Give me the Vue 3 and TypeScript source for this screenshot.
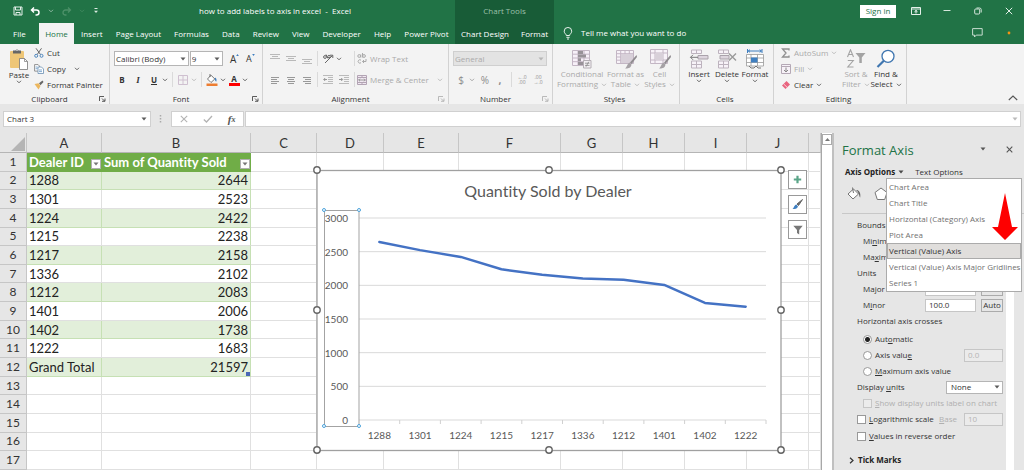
<script setup lang="ts">
import { ref } from 'vue'

interface Row {
  id: string
  qty: number
}

const tabs: string[] = ['File', 'Home', 'Insert', 'Page Layout', 'Formulas', 'Data', 'Review', 'View', 'Developer', 'Help', 'Power Pivot']
const columns: string[] = ['A', 'B', 'C', 'D', 'E', 'F', 'G', 'H', 'I', 'J', '']
const emptyColumns: string[] = columns.slice(2)

const dealers: Row[] = [
  { id: '1288', qty: 2644 },
  { id: '1301', qty: 2523 },
  { id: '1224', qty: 2422 },
  { id: '1215', qty: 2238 },
  { id: '1217', qty: 2158 },
  { id: '1336', qty: 2102 },
  { id: '1212', qty: 2083 },
  { id: '1401', qty: 2006 },
  { id: '1402', qty: 1738 },
  { id: '1222', qty: 1683 },
]
const total = dealers.reduce((sum, d) => sum + d.qty, 0)
const tableRows: Row[] = [...dealers, { id: 'Grand Total', qty: total }]
const blankRows: number[] = [13, 14, 15, 16, 17]

const plot = { left: 49, right: 456, top: 54, bottom: 256 }
const step = (plot.right - plot.left) / dealers.length
const yOf = (v: number): number => plot.bottom - (v / 3000) * (plot.bottom - plot.top)
const xOf = (i: number): number => plot.left + step * (i + 0.5)
const ticks: number[] = [3000, 2500, 2000, 1500, 1000, 500, 0]
const linePoints = dealers.map((d, i) => `${xOf(i)},${yOf(d.qty)}`).join(' ')
const frameHandles: number[][] = [[7, 6], [239, 6], [471, 6], [7, 146], [471, 146], [7, 286], [239, 286], [471, 286]]
const axisHandles: number[][] = [[14, 46], [49, 46], [14, 262], [49, 262]]

const elements: string[] = [
  'Chart Area',
  'Chart Title',
  'Horizontal (Category) Axis',
  'Plot Area',
  'Vertical (Value) Axis',
  'Vertical (Value) Axis Major Gridlines',
  'Series 1',
]
const selected = ref('Vertical (Value) Axis')
const crosses = ref('auto')
</script>

<template>
  <div class="excel">
    <svg class="sprite" aria-hidden="true">
      <symbol id="chev" viewBox="0 0 6 4"><path d="M1 .8 3 2.8 5 .8" fill="none" stroke="currentColor" stroke-width=".9" /></symbol>
      <symbol id="tri" viewBox="0 0 6 4"><path d="M.5 .5h5L3 3.5z" fill="currentColor" /></symbol>
      <symbol id="launch" viewBox="0 0 7 6"><path d="M.5 5V.5H5M3 2.5 5.500 5M6 2.500V5.300H3" fill="none" stroke="currentColor" stroke-width=".8" /></symbol>
      <symbol id="brush" viewBox="0 0 12 14"><path d="M11.500 0 12 2 6.500 9 5 7.600z" fill="#8f8b8f" /><path d="M4.500 7.500 6.500 9.500C6 13 3 13.800 0 13.500 2 12.500 2 9 4.500 7.500z" fill="#a5a1a5" /></symbol>
    </svg>

    <header class="top">
      <div class="title-left">
        <div class="quick">
          <button aria-label="Save"><svg width="10" height="10" viewBox="0 0 10 10"><path d="M1 1h8v8H1zM2.500 1v3h5V1M3 9V6.500h4V9" fill="none" stroke="#e4f0e9" /></svg></button>
          <button aria-label="Undo"><svg width="11" height="9" viewBox="0 0 11 9"><path d="M1.500 3h5a2.500 2.500 0 0 1 0 5H5.500M4 .5 1.500 3 4 5.500" fill="none" stroke="#fff" stroke-width="1.500" /></svg></button>
          <svg class="chev pale"><use href="#chev" /></svg>
          <button aria-label="Redo"><svg width="11" height="9" viewBox="0 0 11 9"><path d="M9.500 3h-5a2.500 2.500 0 0 0 0 5h1M7 .5 9.500 3 7 5.500" fill="none" stroke="#4c9068" stroke-width="1.300" /></svg></button>
          <svg class="chev faded"><use href="#chev" /></svg>
          <button class="customize" aria-label="Customize toolbar"><svg width="6" height="6" viewBox="0 0 6 6"><path d="M1.500 .5h3" stroke="#dcebe2" /><path d="M1 2.800h4L3 5z" fill="#dcebe2" /></svg></button>
        </div>
        <h1>how to add labels to axis in excel &nbsp;-&nbsp; Excel</h1>
      </div>
      <div class="context-title">Chart Tools</div>
      <div class="window">
        <button class="signin">Sign in</button>
        <button aria-label="Ribbon display options"><svg width="10" height="8" viewBox="0 0 10 8"><path d="M.5 .5h9v7h-9zM.5 2h9" fill="none" stroke="#e4f0e9" /><path d="M5 6.500V3.500M3.500 4.800 5 3.400 6.500 4.800" fill="none" stroke="#fff" /></svg></button>
        <button aria-label="Minimize"><svg width="8" height="8" viewBox="0 0 8 8"><path d="M.5 3.500h7" stroke="#d5e6dc" /></svg></button>
        <button aria-label="Restore"><svg width="8" height="8" viewBox="0 0 8 8"><rect x=".7" y="2" width="5" height="5" rx="1" fill="none" stroke="#d5e6dc" /><path d="M2.500 1h3a1.700 1.700 0 0 1 1.700 1.700v2.800" fill="none" stroke="#d5e6dc" /></svg></button>
        <button aria-label="Close"><svg width="8" height="8" viewBox="0 0 8 8"><path d="M.8 .8l6.400 6.400M7.200 .8.8 7.200" stroke="#e4f0e9" /></svg></button>
      </div>
      <nav class="tabs">
        <button v-for="t in tabs" :key="t" :class="{ active: t === 'Home', file: t === 'File' }">{{ t }}</button>
      </nav>
      <nav class="tabs context">
        <button>Chart Design</button>
        <button>Format</button>
      </nav>
      <div class="tell">
        <svg width="10" height="13" viewBox="0 0 10 13"><path d="M3.300 8.500C3.300 7 1.200 6.500 1.200 4.200a3.700 3.700 0 0 1 7.500 0C8.700 6.500 6.600 7 6.600 8.500zM3.400 10.300h3.200M4 12h2" fill="none" stroke="#fff" stroke-width=".9" /></svg>
        <button class="tell-label">Tell me what you want to do</button>
        <button class="side" aria-label="Comments"><svg width="11" height="10" viewBox="0 0 11 10"><path d="M.6 .6h9.600v6.500H4.200L2.500 9V7.100H.6z" fill="none" stroke="#c6dccf" /></svg></button>
        <button class="side" aria-label="Status"><svg width="4" height="4" viewBox="0 0 4 4"><circle cx="2" cy="2" r="1.400" fill="#f39314" /></svg></button>
      </div>
    </header>

    <section class="ribbon" aria-label="Ribbon">
      <div class="group">
        <div class="body">
          <button class="big paste">
            <svg width="20" height="22" viewBox="0 0 20 22"><rect x="1" y="3" width="14" height="17" rx="1" fill="#eec677" /><path d="M4 2.500h2.500a1.600 1.600 0 0 1 3 0H12V5.500H4z" fill="#666" /><circle cx="8" cy="2.400" r=".7" fill="#f1f1f1" /><path d="M10.500 10.500h5l3 3v8h-8z" fill="#fff" stroke="#777" stroke-width=".8" /><path d="M15.500 10.500v3h3" fill="none" stroke="#777" stroke-width=".7" /></svg>
            <span>Paste</span>
            <svg class="chev"><use href="#chev" /></svg>
          </button>
          <div class="stack">
            <button><svg width="10" height="10" viewBox="0 0 10 10"><path d="M2 .3 6.500 6.500M7.500 .3 3.200 6.500" stroke="#666" /><circle cx="2.200" cy="7.800" r="1.500" fill="none" stroke="#4e86bd" /><circle cx="7.500" cy="7.800" r="1.500" fill="none" stroke="#4e86bd" /></svg>Cut</button>
            <button><svg width="10" height="10" viewBox="0 0 10 10"><path d="M.6 .6h3.500l1.400 1.500v5H.6z" fill="#fff" stroke="#777" stroke-width=".8" /><path d="M4 3h3.500l2 2v4.500H4z" fill="#fff" stroke="#6b8fb3" stroke-width=".8" /><path d="M5 6h3M5 7.600h3M1.600 3h2M1.600 4.700h2" stroke="#4e86bd" stroke-width=".7" /></svg>Copy <svg class="chev after"><use href="#chev" /></svg></button>
            <button><svg width="10" height="10" viewBox="0 0 10 10"><path d="M.5 4 4.500 3.200 6.500 6 4.500 9.500z" fill="#ecb75f" /><path d="M5 3.200 8.500 .6 9.500 2 6.500 5.200z" fill="#666" /></svg>Format Painter</button>
          </div>
        </div>
        <footer><span>Clipboard</span><svg class="launch"><use href="#launch" /></svg></footer>
      </div>

      <div class="group">
        <div class="body rows">
          <div class="row">
            <label class="pick font-name"><select aria-label="Font"><option>Calibri (Body)</option></select><svg class="chev"><use href="#tri" /></svg></label>
            <label class="pick font-size"><select aria-label="Font size"><option>9</option></select><svg class="chev"><use href="#tri" /></svg></label>
            <button class="t16 glyph" aria-label="Increase font size">A<svg class="mark" viewBox="0 0 4 3"><path d="M0 3 2 0 4 3z" fill="#3f7fc0" /></svg></button>
            <button class="t16 glyph small" aria-label="Decrease font size">A<svg class="mark" viewBox="0 0 4 3"><path d="M0 0h4L2 3z" fill="#3f7fc0" /></svg></button>
          </div>
          <div class="row">
            <button class="t16 bold">B</button>
            <button class="t16 italic">I</button>
            <button class="t16 under">U</button>
            <svg class="chev"><use href="#chev" /></svg>
            <i class="sep wide"></i>
            <button class="t16" aria-label="Borders"><svg width="10" height="10" viewBox="0 0 10 10"><path d="M.5 .5h9v9h-9zM5 .5v9M.5 5h9" fill="none" stroke="#cfc0d0" /></svg></button>
            <svg class="chev dim"><use href="#chev" /></svg>
            <i class="sep wide"></i>
            <button class="t16" aria-label="Fill color"><svg width="12" height="12" viewBox="0 0 12 12"><path d="M5 1.200 8.800 5 5 8.500 1.500 5zM4 0v3" fill="#fff" stroke="#666" stroke-width=".9" /><path d="M9 3.500c1.700 1 1.800 2.500 1.200 4.300C9 7 8.500 5.500 9 3.500z" fill="#3f7fc0" /><path d="M.5 9.500h11V12H.5z" fill="#ed7d31" /></svg></button>
            <svg class="chev"><use href="#chev" /></svg>
            <button class="t16 color-a" aria-label="Font color"><span>A</span></button>
            <svg class="chev"><use href="#chev" /></svg>
          </div>
        </div>
        <footer><span>Font</span><svg class="launch"><use href="#launch" /></svg></footer>
      </div>

      <div class="group">
        <div class="body rows">
          <div class="row">
            <button class="t16" aria-label="Top align"><svg width="10" height="12" viewBox="0 0 10 12"><path d="M0 1.500h10M2 3.500h6M0 5.500h10" stroke="#b9b9b9" /></svg></button>
            <button class="t16" aria-label="Middle align"><svg width="10" height="12" viewBox="0 0 10 12"><path d="M0 3.500h10M2 5.500h6M0 7.500h10" stroke="#b9b9b9" /></svg></button>
            <button class="t16" aria-label="Bottom align"><svg width="10" height="12" viewBox="0 0 10 12"><path d="M0 6.500h10M2 8.500h6M0 10.500h10" stroke="#b9b9b9" /></svg></button>
            <i class="sep"></i>
            <button class="t16" aria-label="Orientation"><svg width="11" height="11" viewBox="0 0 11 11"><path d="M2 10 9.500 2.500M9.800 5V2.200H7" fill="none" stroke="#666" /><circle cx="2" cy="4" r="1.400" fill="none" stroke="#666" /><path d="M3 1.500 5 5.500" stroke="#666" /><circle cx="6" cy="3.500" r="1.200" fill="none" stroke="#666" /></svg></button>
            <svg class="chev"><use href="#chev" /></svg>
            <i class="sep push"></i>
            <button class="label-btn dim"><svg width="10" height="11" viewBox="0 0 10 11"><circle cx="2.200" cy="3" r="1.400" fill="none" stroke="#aaa" /><path d="M3.800 1.500v3M5.500 0v4.500M4 7.200a1.700 1.700 0 1 0 0 2.500M9 6v2.500H5.500M7 7 5.500 8.500 7 10" fill="none" stroke="#aaa" /><circle cx="7" cy="3" r="1.400" fill="none" stroke="#aaa" /></svg>Wrap Text</button>
          </div>
          <div class="row">
            <button class="t16" aria-label="Align left"><svg width="8" height="8" viewBox="0 0 8 8"><path d="M0 1.500h8M0 3.500h6M0 5.500h8M0 7.500h6" stroke="#999" /></svg></button>
            <button class="t16" aria-label="Center"><svg width="8" height="8" viewBox="0 0 8 8"><path d="M0 1.500h8M1 3.500h6M0 5.500h8M1 7.500h6" stroke="#999" /></svg></button>
            <button class="t16" aria-label="Align right"><svg width="8" height="8" viewBox="0 0 8 8"><path d="M0 1.500h8M2 3.500h6M0 5.500h8M2 7.500h6" stroke="#999" /></svg></button>
            <i class="sep"></i>
            <button class="t16" aria-label="Decrease indent"><svg width="10" height="9" viewBox="0 0 10 9"><path d="M0 .5h10M5 2.500h5M5 4.500h5M5 6.500h5M0 8.500h10" stroke="#bbb" /><path d="M4 4.500H.8M2.200 3 .7 4.500 2.200 6" fill="none" stroke="#999" /></svg></button>
            <button class="t16" aria-label="Increase indent"><svg width="10" height="9" viewBox="0 0 10 9"><path d="M0 .5h10M5 2.500h5M5 4.500h5M5 6.500h5M0 8.500h10" stroke="#bbb" /><path d="M0 4.500h3.500M2.200 3l1.500 1.500L2.200 6" fill="none" stroke="#999" /></svg></button>
            <i class="sep push"></i>
            <button class="label-btn dim"><svg width="10" height="10" viewBox="0 0 10 10"><path d="M.5 .5h9v9h-9zM5 .5v2M5 7.500v2M.5 2.500h9M.5 7.500h9" fill="#f0e8f1" stroke="#b3a4b4" /><path d="M1.500 5h7M3 3.700 1.700 5 3 6.300M7 3.700 8.300 5 7 6.300" fill="none" stroke="#888" stroke-width=".8" /></svg>Merge &amp; Center<svg class="chev after"><use href="#chev" /></svg></button>
          </div>
        </div>
        <footer><span>Alignment</span><svg class="launch dim"><use href="#launch" /></svg></footer>
      </div>

      <div class="group">
        <div class="body rows">
          <div class="row">
            <label class="pick number"><select aria-label="Number format" disabled><option>General</option></select><svg class="chev dim"><use href="#tri" /></svg></label>
          </div>
          <div class="row signs">
            <button class="t16 sign">$</button>
            <svg class="chev"><use href="#chev" /></svg>
            <button class="t20 sign">%</button>
            <button class="sign comma">,</button>
            <i class="sep"></i>
            <button class="t16 decimals">←.0<br />.00</button>
            <button class="t16 decimals">.00<br />→.0</button>
          </div>
        </div>
        <footer><span>Number</span><svg class="launch dim"><use href="#launch" /></svg></footer>
      </div>

      <div class="group">
        <div class="body tiles dim">
          <button class="big cond">
            <svg width="22" height="20" viewBox="0 0 22 20"><path d="M1.500 1.500h17v15h-17zM7 1.500v15M13 1.500v15M1.500 5.200h17M1.500 9h17M1.500 12.700h17" fill="#f7f0f8" stroke="#c3b6c4" /><path d="M7 2h5v3H7zM7 5.500h8v3H7zM7 9.300h3v3H7zM7 13h5v3H7z" fill="#989298" /><path d="M12.500 11.500h7.500v7.500h-7.500z" fill="#f3f0f3" stroke="#b5afb5" /><path d="M14 14.200h4.500M14 16.400h4.500M17.800 12.700l-2.800 5" stroke="#888" stroke-width=".8" /></svg>
            <span>Conditional<br />Formatting <svg class="chev"><use href="#chev" /></svg></span>
          </button>
          <button class="big fmt-table">
            <svg width="22" height="20" viewBox="0 0 22 20"><path d="M1.500 1.500h17v13h-17zM5.700 1.500v13M10 1.500v13M14.300 1.500v13M1.500 4.700h17M1.500 8h17M1.500 11.200h17" fill="#f7f2f8" stroke="#c3b6c4" /><path d="M6 5h12v9H6z" fill="#d8d0d9" /><use href="#brush" x="10" y="6" width="12" height="14" /></svg>
            <span>Format as<br />Table <svg class="chev"><use href="#chev" /></svg></span>
          </button>
          <button class="big cell-styles">
            <svg width="22" height="20" viewBox="0 0 22 20"><path d="M1.500 .5h17v14h-17zM6 .5v14M14 .5v14M1.500 4h17M1.500 11h17" fill="#f7f2f8" stroke="#c3b6c4" /><path d="M6 4h8v7H6z" fill="#d8d0d9" /><use href="#brush" x="10" y="6" width="12" height="14" /></svg>
            <span>Cell<br />Styles <svg class="chev"><use href="#chev" /></svg></span>
          </button>
        </div>
        <footer><span>Styles</span></footer>
      </div>

      <div class="group">
        <div class="body tiles cells">
          <button class="big">
            <svg width="20" height="20" viewBox="0 0 20 20"><path d="M2.500 1h10v3.500h-10zM7.500 1v3.500M2.500 12h10v7h-10zM7.500 12v7M2.500 15.500h10" fill="#f7f2f8" stroke="#bdb3be" /><path d="M9 6.500h10v3.500H9z" fill="#ddd5de" stroke="#aaa2ab" /><path d="M9 8.300H1.500M4 5.800 1.500 8.300 4 10.800" fill="none" stroke="#777" /></svg>
            <span>Insert</span><svg class="chev"><use href="#chev" /></svg>
          </button>
          <button class="big">
            <svg width="20" height="20" viewBox="0 0 20 20"><path d="M1.500 1h10v3.500h-10zM6.500 1v3.500M1.500 12h10v7h-10zM6.500 12v7M1.500 15.500h10" fill="#f7f2f8" stroke="#bdb3be" /><path d="M3 6.500h9v3.500H3z" fill="#ddd5de" stroke="#aaa2ab" /><path d="M12 4.500l7 7M19 4.500l-7 7" stroke="#999" stroke-width="1.400" /></svg>
            <span>Delete</span><svg class="chev"><use href="#chev" /></svg>
          </button>
          <button class="big">
            <svg width="20" height="20" viewBox="0 0 20 20"><path d="M2.500 0v4M17 0v4M3 2h13.500M5 .7 3.300 2 5 3.300M14.700 .7 16.400 2l-1.700 1.300" fill="none" stroke="#3f7fc0" /><path d="M1.500 5.500h17v11.500h-17zM6 5.500v11.500M12.500 5.500v11.500M1.500 9h17M1.500 13.500h17" fill="#fff" stroke="#999" stroke-width=".8" /><path d="M6 8.500h6.500v5H6z" fill="#3f7fc0" /><path d="M4 17l2 2h3l2-2 2 2h3" fill="none" stroke="#777" /></svg>
            <span>Format</span><svg class="chev"><use href="#chev" /></svg>
          </button>
        </div>
        <footer><span>Cells</span></footer>
      </div>

      <div class="group">
        <div class="body editing">
          <div class="stack">
            <button class="dim"><svg width="10" height="10" viewBox="0 0 10 10"><path d="M8 2.500V1H1.500L5 5 1.500 9H8V7.500" fill="none" stroke="#909090" stroke-width="1.300" /></svg>AutoSum<svg class="chev"><use href="#chev" /></svg></button>
            <button class="dim"><svg width="10" height="10" viewBox="0 0 10 10"><path d="M.5 .5h9v9h-9zM.5 2.500h9" fill="#f7f2f8" stroke="#b5a9b6" /><path d="M5 3.500v4.500M3 6l2 2 2-2" fill="none" stroke="#888" /></svg>Fill <svg class="chev"><use href="#chev" /></svg></button>
            <button><svg width="10" height="10" viewBox="0 0 10 10"><path d="M5.500 1 9 4.500 4.500 9 1 5.500z" fill="#e8647f" /><path d="M2.700 4 6 7.200" stroke="#fff" stroke-width=".7" /></svg>Clear <svg class="chev"><use href="#chev" /></svg></button>
          </div>
          <button class="big sort dim">
            <svg width="20" height="20" viewBox="0 0 20 20"><path d="M1.500 8 4.500 .8 7.500 8M2.600 5.500h3.800M1.800 11.500h5.500L1.800 18h5.700" fill="none" stroke="#a3a3a3" stroke-width="1.100" /><path d="M9.500 4h10l-3.700 4.500V14h-2.500V8.500z" fill="#a3a3a3" /></svg>
            <span>Sort &amp;<br />Filter <svg class="chev"><use href="#chev" /></svg></span>
          </button>
          <button class="big">
            <svg width="20" height="20" viewBox="0 0 20 20"><circle cx="12" cy="7.300" r="6" fill="#fff" stroke="#3f76b0" stroke-width="1.300" /><path d="M7.800 11.800 1.500 18" stroke="#3f76b0" stroke-width="2.200" /></svg>
            <span>Find &amp;<br />Select <svg class="chev"><use href="#chev" /></svg></span>
          </button>
        </div>
        <footer><span>Editing</span></footer>
      </div>

      <button class="collapse" aria-label="Collapse ribbon"><svg width="10" height="6" viewBox="0 0 10 6"><path d="M.8 5 5 1l4.200 4" fill="none" stroke="#555" stroke-width="1.100" /></svg></button>
    </section>

    <section class="formula" aria-label="Formula bar">
      <label class="namebox"><input aria-label="Name box" value="Chart 3" /><svg class="chev"><use href="#tri" /></svg></label>
      <svg width="3" height="9" viewBox="0 0 3 9"><path d="M1.500 1v1.500M1.500 4v1.500M1.500 7v1.500" stroke="#aaa" stroke-width="1.500" /></svg>
      <div class="fx">
        <button aria-label="Cancel"><svg width="8" height="8" viewBox="0 0 8 8"><path d="M.8 .8l6.400 6.400M7.200 .8.8 7.200" stroke="#b3b3b3" stroke-width="1.100" /></svg></button>
        <button aria-label="Enter"><svg width="10" height="8" viewBox="0 0 10 8"><path d="M.8 4.500 3.500 7 9 1" fill="none" stroke="#b3b3b3" stroke-width="1.300" /></svg></button>
        <button class="fx-glyph" aria-label="Insert function"><i>f</i><i class="x">x</i></button>
      </div>
      <label class="entry"><input aria-label="Formula" /><svg class="chev dim"><use href="#tri" /></svg></label>
    </section>

    <main class="work">
      <div class="sheet">
        <table>
          <colgroup><col class="c-num" /><col class="c-a" /><col class="c-b" /><col class="c-cd" /><col class="c-d" /><col class="c-e" /><col class="c-f" /><col class="c-g" /><col class="c-g" /><col class="c-g" /><col class="c-g" /><col /></colgroup>
          <thead>
            <tr>
              <th class="corner"><svg width="14" height="14" viewBox="0 0 14 14"><path d="M14 0v14H0z" fill="#b5b5b5" /></svg></th>
              <th v-for="(c, i) in columns" :key="i">{{ c }}</th>
            </tr>
          </thead>
          <tbody>
            <tr class="heading">
              <th>1</th>
              <td><div class="filter-head">Dealer ID<button aria-label="Filter dealers"><svg class="chev"><use href="#tri" /></svg></button></div></td>
              <td><div class="filter-head">Sum of Quantity Sold<button aria-label="Filter quantity"><svg class="chev"><use href="#tri" /></svg></button></div></td>
              <td v-for="(c, i) in emptyColumns" :key="i"></td>
            </tr>
            <tr v-for="(r, n) in tableRows" :key="r.id" :class="{ band: n % 2 === 0, total: n === tableRows.length - 1 }">
              <th>{{ n + 2 }}</th>
              <td class="data">{{ r.id }}</td>
              <td class="data qty">{{ r.qty }}</td>
              <td v-for="(c, i) in emptyColumns" :key="i"></td>
            </tr>
            <tr v-for="n in blankRows" :key="n">
              <th>{{ n }}</th>
              <td v-for="(c, i) in columns" :key="i"></td>
            </tr>
          </tbody>
        </table>

        <svg class="chart" width="478" height="294" viewBox="0 0 478 294" role="img" aria-label="Quantity Sold by Dealer">
          <rect x="7" y="6.500" width="464" height="280" fill="#fff" stroke="#a0a0a0" stroke-width="1.300" />
          <text class="chart-title" x="238" y="33" text-anchor="middle">Quantity Sold by Dealer</text>
          <g v-for="t in ticks" :key="t">
            <line :x1="plot.left" :x2="plot.right" :y1="yOf(t)" :y2="yOf(t)" stroke="#d9d9d9" />
            <text class="axis" x="38" :y="yOf(t) + 4" text-anchor="end">{{ t }}</text>
          </g>
          <g v-for="(d, i) in dealers" :key="d.id">
            <line :x1="xOf(i) + step / 2" :x2="xOf(i) + step / 2" :y1="plot.bottom" :y2="plot.bottom + 4" stroke="#d0d0d0" />
            <text class="axis" :x="xOf(i)" y="275" text-anchor="middle">{{ d.id }}</text>
          </g>
          <polyline :points="linePoints" fill="none" stroke="#4472c4" stroke-width="2.500" stroke-linecap="round" stroke-linejoin="round" />
          <rect x="14.500" y="46.500" width="34.500" height="216" fill="none" stroke="#a3a3a3" />
          <circle v-for="(h, i) in axisHandles" :key="'a' + i" :cx="h[0]" :cy="h[1]" r="1.500" fill="#fff" stroke="#4ba3dc" />
          <circle v-for="(h, i) in frameHandles" :key="'f' + i" :cx="h[0]" :cy="h[1]" r="3.200" fill="#fff" stroke="#666" stroke-width="1.400" />
        </svg>

        <div class="chart-tools">
          <button aria-label="Chart elements"><svg width="9" height="9" viewBox="0 0 9 9"><path d="M4.500 .8v7.400M.8 4.500h7.400" stroke="#5aa588" stroke-width="2.200" /></svg></button>
          <button aria-label="Chart styles"><svg width="11" height="11" viewBox="0 0 11 11"><path d="M10.500 .5 5 5l1.500 1.500z" fill="#666" stroke="#666" /><path d="M4.500 5.500 6 7.500C5 10 3 10 .5 10 2 9 2 6 4.500 5.500z" fill="#3f7fc0" /></svg></button>
          <button aria-label="Chart filters"><svg width="10" height="10" viewBox="0 0 10 10"><path d="M.3 .8h9.400L6.200 5v4.500L4 8V5z" fill="#777" /></svg></button>
        </div>
      </div>

      <div class="scroll"><button aria-label="Scroll up"><svg width="5" height="3" viewBox="0 0 5 3"><path d="M0 3 2.500 0 5 3z" fill="#777" /></svg></button></div>

      <aside class="pane">
        <div class="pane-head">
          <h2>Format Axis</h2>
          <button aria-label="Pane options"><svg class="chev"><use href="#tri" /></svg></button>
          <button aria-label="Close pane"><svg width="7" height="7" viewBox="0 0 7 7"><path d="M.7 .7l5.600 5.600M6.300 .7.7 6.300" stroke="#555" stroke-width="1.100" /></svg></button>
        </div>
        <div class="pane-tabs">
          <button class="on">Axis Options<svg class="chev"><use href="#tri" /></svg></button>
          <button>Text Options</button>
        </div>
        <div class="pane-icons">
          <button aria-label="Fill and line"><svg width="15" height="14" viewBox="0 0 15 14"><path d="M6.500 2 11.500 7 6 12 1 7zM5.500 .5 6.500 6" fill="#fff" stroke="#666" stroke-width=".9" /><path d="M9 3c3 0 5 2.500 4.200 7.500C12 9.500 12.500 5.500 9 3z" fill="#666" /></svg></button>
          <button aria-label="Effects"><svg width="14" height="14" viewBox="0 0 14 14"><path d="M7 1l6 4.500-2.300 7H3.300L1 5.500z" fill="#fff" stroke="#777" /></svg></button>
        </div>
        <div class="pane-scroll">
          <form class="options" @submit.prevent>
            <p>Bounds</p>
            <div class="field sub"><label for="min">Mi<u>n</u>imum</label><input id="min" value="0.0" /><button>Auto</button></div>
            <div class="field sub"><label for="max">Ma<u>x</u>imum</label><input id="max" value="3000.0" /><button>Auto</button></div>
            <p>Units</p>
            <div class="field sub"><label for="major">Ma<u>j</u>or</label><input id="major" value="500.0" /><button>Auto</button></div>
            <div class="field sub"><label for="minor">M<u>i</u>nor</label><input id="minor" value="100.0" /><button>Auto</button></div>
            <p class="crosses">Horizontal axis crosses</p>
            <div class="field sub"><label><input v-model="crosses" type="radio" value="auto" />Aut<u>o</u>matic</label></div>
            <div class="field sub"><label><input v-model="crosses" type="radio" value="value" />Axis valu<u>e</u></label><input class="short" aria-label="Axis value" value="0.0" disabled /></div>
            <div class="field sub"><label><input v-model="crosses" type="radio" value="max" /><span><u>M</u>aximum axis value</span></label></div>
            <div class="field"><label for="units">Display <u>u</u>nits</label><span class="pick units"><select id="units"><option>None</option></select><svg class="chev"><use href="#tri" /></svg></span></div>
            <div class="field sub off"><label><input type="checkbox" disabled /><span><u>S</u>how display units label on chart</span></label></div>
            <div class="field"><label><input type="checkbox" /><span><u>L</u>ogarithmic scale</span></label><label class="base off" for="base"><span><u>B</u>ase</span></label><input id="base" class="short" value="10" disabled /></div>
            <div class="field last"><label><input type="checkbox" /><span><u>V</u>alues in reverse order</span></label></div>
            <button class="section"><svg width="5" height="7" viewBox="0 0 5 7"><path d="M1 .8 4 3.500 1 6.200" fill="none" stroke="#333" stroke-width="1.200" /></svg>Tick Marks</button>
          </form>
        </div>

        <div class="menu">
          <button v-for="e in elements" :key="e" :class="{ current: e === selected }" @click="selected = e">{{ e }}</button>
          <svg class="arrow" width="26" height="47" viewBox="0 0 26 47"><path d="M13 0 20 34h6L13 47 0 34h6z" fill="#fe0000" /></svg>
        </div>
      </aside>
    </main>
  </div>
</template>

<style>
body {
  margin: 0;
}
</style>

<style scoped>
.excel {
  display: flex;
  flex-direction: column;
  height: 100vh;
  overflow: hidden;
  background: #e6e6e6;
  color: #333;
  font: 8px/10px "Open Sans", "Noto Sans", sans-serif;
}
* {
  box-sizing: border-box;
}
button,
input,
select {
  margin: 0;
  padding: 0;
  border: 0;
  border-radius: 0;
  background: none;
  color: inherit;
  font: inherit;
}
button {
  display: flex;
  align-items: center;
  justify-content: center;
  white-space: nowrap;
}
svg {
  flex: none;
}
h1,
h2,
p {
  margin: 0;
  font: inherit;
}
.sprite {
  position: absolute;
  width: 0;
  height: 0;
}
.chev {
  width: 6px;
  height: 4px;
  opacity: 0.8;
}
.dim {
  color: #aaa;
}

.top {
  display: grid;
  grid-template-columns: 455px 99px minmax(0, 1fr);
  grid-template-rows: 22px 22px;
  flex: none;
  background: #217346;
  color: #fff;
}
.title-left {
  display: flex;
  align-items: center;
  justify-content: space-between;
  padding: 0 104px 0 13px;
}
.quick {
  display: flex;
  align-items: center;
  gap: 7px;
}
.customize {
  margin-left: 1px;
}
.pale {
  color: #b9d5c5;
}
.faded {
  color: #4c9068;
}
.context-title,
.context {
  background: #185c37;
}
.context-title {
  display: flex;
  align-items: center;
  justify-content: center;
  color: #9cc0ab;
}
.window {
  display: flex;
  align-items: center;
  justify-content: flex-end;
}
.window button {
  width: 31px;
}
.window .signin {
  width: 36px;
  height: 13px;
  margin-right: 4px;
  background: #fff;
  color: #217346;
}
.tabs {
  display: flex;
  padding-top: 1px;
}
.tabs button {
  flex: auto;
  padding: 0 6px;
}
.tabs .file {
  flex: none;
  padding: 0 13px;
}
.tabs .active {
  background: #f3f3f3;
  color: #217346;
}
.tell {
  display: flex;
  align-items: center;
  padding-left: 9px;
}
.tell-label {
  margin: 0 auto 0 8px;
}
.tell .side {
  width: 31px;
}

.ribbon {
  display: grid;
  grid-template-columns: 110px 153px 186px 104px 127px 94px 133px 1fr;
  flex: none;
  height: 60px;
  background: #f3f3f3;
}
.group {
  display: flex;
  flex-direction: column;
  border-right: 1px solid #d2d2d2;
}
.body {
  display: flex;
  flex: 1;
}
.rows {
  flex-direction: column;
  padding: 4px 4px 0;
}
.row {
  display: flex;
  align-items: center;
  height: 21px;
}
.group footer {
  display: flex;
  align-items: center;
  height: 11px;
  padding-right: 3px;
}
.group footer span {
  flex: 1;
  text-align: center;
}
.launch {
  width: 7px;
  height: 6px;
}
.big {
  flex-direction: column;
  justify-content: flex-start;
}
.big > span {
  text-align: center;
}
.big span .chev {
  margin-left: 1px;
}
.paste {
  width: 34px;
  padding-top: 4px;
  padding-left: 4px;
}
.stack {
  padding-top: 1px;
}
.stack button {
  height: 16px;
  gap: 3px;
}
.after {
  margin-left: 5px;
}
.pick {
  display: flex;
  align-items: center;
  position: relative;
  height: 15px;
  border: 1px solid #b5b5b5;
  background: #fff;
}
.pick select {
  appearance: none;
  width: 100%;
  height: 100%;
  padding-left: 1px;
  line-height: 10px;
}
.pick .chev {
  position: absolute;
  right: 2px;
  pointer-events: none;
}
.font-name {
  width: 77px;
}
.font-size {
  width: 34px;
  margin: 0 4px 0 1px;
}
.number {
  width: 94px;
  background: #e3e3e3;
  border-color: #cfcfcf;
}
.number select {
  opacity: 1;
  color: #ababab;
}
.t16 {
  width: 16px;
  height: 16px;
}
.t20 {
  width: 20px;
}
.glyph {
  font-size: 10px;
}
.glyph .mark {
  width: 3px;
  height: 2px;
  align-self: flex-start;
  margin-top: 3px;
}
.small {
  font-size: 9px;
}
.bold {
  font-weight: 700;
}
.italic {
  font: italic 700 9px/10px "Liberation Serif", serif;
}
.under {
  font-weight: 700;
  text-decoration: underline;
}
.sep {
  width: 1px;
  height: 15px;
  margin: 0 2px;
  background: #dadada;
}
.wide {
  margin: 0 2px 0 4px;
}
.push {
  margin-left: auto;
}
.label-btn {
  gap: 3px;
  width: 87px;
  justify-content: flex-start;
}
.color-a span {
  width: 11px;
  border-bottom: 3px solid #f00;
  font-weight: 700;
  line-height: 9px;
}
.signs {
  color: #8c8c8c;
}
.sign {
  font-size: 10px;
}
.comma {
  width: 10px;
  font-weight: 700;
}
.signs .sep {
  margin: 0 2px 0 6px;
}
.decimals {
  font-size: 5px;
  line-height: 5px;
}
.tiles {
  padding-top: 5px;
}
.cond {
  width: 50px;
  margin-left: 4px;
}
.fmt-table {
  width: 37px;
}
.cell-styles {
  width: 31px;
}
.cells {
  padding-left: 5px;
}
.cells .big {
  width: 28px;
}
.editing {
  padding-left: 7px;
}
.editing .stack {
  width: 60px;
}
.editing .big {
  width: 30px;
  padding-top: 5px;
}
.collapse {
  align-self: end;
  justify-self: end;
  padding: 0 6px 3px;
}

.formula {
  display: flex;
  align-items: center;
  flex: none;
  height: 29px;
  padding: 0 3px;
}
.namebox,
.fx,
.entry {
  display: flex;
  align-items: center;
  height: 16px;
  border: 1px solid #d0d0d0;
  background: #fff;
}
.namebox {
  width: 148px;
  margin-right: 8px;
  padding: 0 3px;
}
.namebox input,
.entry input {
  flex: 1;
  min-width: 0;
}
.fx {
  justify-content: space-around;
  width: 73px;
  margin: 0 1px 0 9px;
}
.fx-glyph {
  color: #555;
  font: 700 11px/12px "Liberation Serif", serif;
}
.fx-glyph .x {
  font-size: 8px;
  padding-top: 2px;
}
.entry {
  flex: 1;
  padding-right: 2px;
}

.work {
  display: grid;
  grid-template-columns: minmax(0, 1fr) 12px 190px;
  flex: 1;
  min-height: 0;
}
.sheet {
  position: relative;
  min-height: 0;
  border-right: 1px solid #a8a8a8;
}
table {
  width: 100%;
  height: 100%;
  table-layout: fixed;
  border-collapse: separate;
  border-spacing: 0;
  background: #fff;
  font: 13px/14px Lato, sans-serif;
  font-variant-ligatures: none;
  color: #222;
}
.c-num { width: 27px; }
.c-a { width: 75px; }
.c-b { width: 149px; }
.c-cd { width: 66px; }
.c-d { width: 67px; }
.c-e { width: 75px; }
.c-f { width: 102px; }
.c-g { width: 62px; }
th,
td {
  padding: 0;
  border-right: 1px solid #e0e0e0;
  border-bottom: 1px solid #e0e0e0;
  white-space: nowrap;
}
th {
  border-color: #c6c6c6;
  background: #e6e6e6;
  color: #333;
  font-size: 12px;
  font-weight: 400;
}
thead th {
  height: 20px;
  padding-top: 1px;
  border-bottom-color: #b5b5b5;
  font-size: 13px;
}
thead .corner {
  padding: 2px 1px 0 0;
}
.corner svg {
  display: block;
  margin-left: auto;
}
.data {
  padding: 0 2px;
}
.qty {
  text-align: right;
  border-right-color: #c6e0b4;
}
.band .data {
  background: #e2efda;
  border-color: #c6e0b4;
}
.total .qty {
  background: linear-gradient(#4a66b5, #4a66b5) right bottom / 4px 4px no-repeat #e2efda;
}
.heading td:nth-child(-n + 3) {
  border-color: #70ad47;
  background: #70ad47;
  color: #fff;
  font-weight: 700;
}
.filter-head {
  display: flex;
  align-items: center;
  justify-content: space-between;
  padding-left: 2px;
}
.filter-head button {
  width: 10px;
  height: 10px;
  align-self: flex-end;
  border: 1px solid #b0b0b0;
  background: #fff;
  color: #555;
}
.chart {
  position: absolute;
  left: 310px;
  top: 31px;
}
.chart-title {
  fill: #595959;
  font: 16px Lato, sans-serif;
  font-variant-ligatures: none;
}
.axis {
  fill: #595959;
  font: 10px Lato, sans-serif;
}
.chart-tools {
  display: grid;
  gap: 6px;
  position: absolute;
  left: 788px;
  top: 37px;
}
.chart-tools button {
  width: 19px;
  height: 19px;
  border: 1px solid #999;
  background: #fff;
}
.scroll {
  padding-top: 1px;
  border-right: 2px solid #c0c0c0;
  background: #fff;
}
.scroll button {
  width: 10px;
  height: 11px;
  border: 1px solid #ababab;
}

.pane {
  display: flex;
  flex-direction: column;
  position: relative;
  min-width: 0;
  padding-left: 8px;
}
.pane-head {
  display: flex;
  align-items: center;
  height: 31px;
  padding: 1px 11px 0 0;
}
.pane-head h2 {
  margin-right: auto;
  padding-top: 2px;
  color: #217346;
  font-size: 13px;
  line-height: 18px;
}
.pane-head button + button {
  margin-left: 20px;
}
.pane-tabs {
  display: flex;
  gap: 11px;
  height: 16px;
  padding-left: 3px;
}
.pane-tabs .on {
  gap: 3px;
  color: #222;
  font-weight: 700;
}
.pane-icons {
  display: flex;
  gap: 12px;
  height: 34px;
  padding: 0 0 5px 5px;
  border-bottom: 1px solid #c8c8c8;
}
.pane-scroll {
  flex: 1;
  min-height: 0;
  margin-right: 10px;
  overflow: hidden;
  border-right: 8px solid #fff;
}
.options {
  padding: 3px 3px 0 15px;
}
.options p,
.field {
  height: 16px;
  line-height: 16px;
}
.options .crosses {
  margin-bottom: 2px;
}
.field {
  display: flex;
  align-items: center;
}
.field label {
  display: flex;
  align-items: center;
  margin-right: auto;
  white-space: pre;
}
.sub {
  padding-left: 6px;
}
.field > input {
  width: 51px;
  height: 13px;
  padding-left: 3px;
  border: 1px solid #c6c6c6;
  background: #fff;
}
.field > .short {
  width: 39px;
}
.field > input:disabled {
  background: #ebebeb;
  color: #b5b5b5;
}
.field > button {
  width: 22px;
  height: 13px;
  margin-left: 5px;
  border: 1px solid #ababab;
}
input[type="radio"],
input[type="checkbox"] {
  appearance: none;
  width: 9px;
  height: 9px;
  margin-right: 3px;
  border: 1px solid #999;
  background: #fff;
}
input[type="radio"] {
  border-radius: 50%;
}
input[type="radio"]:checked {
  background: radial-gradient(#222 2px, #fff 3px);
}
input[type="checkbox"]:disabled {
  border-color: #c6c6c6;
  background: #ececec;
}
.off {
  color: #b0b0b0;
}
.field .base {
  margin-right: 7px;
}
.units {
  width: 57px;
  height: 13px;
}
.units select {
  padding-left: 4px;
}
.last {
  margin-top: 1px;
}
.section {
  gap: 4px;
  height: 16px;
  margin: 8px 0 0 -8px;
  color: #222;
  font-weight: 700;
}
.menu {
  display: grid;
  position: absolute;
  left: 52px;
  top: 45px;
  width: 136px;
  border: 1px solid #ababab;
  background: #fff;
  color: #707070;
}
.menu button {
  justify-content: flex-start;
  height: 16px;
  padding-left: 2px;
}
.menu .current {
  border: 1px solid #ababab;
  padding-left: 1px;
  background: #e0dedc;
  color: #333;
}
.arrow {
  position: absolute;
  left: 105px;
  top: 14px;
  pointer-events: none;
}
</style>
